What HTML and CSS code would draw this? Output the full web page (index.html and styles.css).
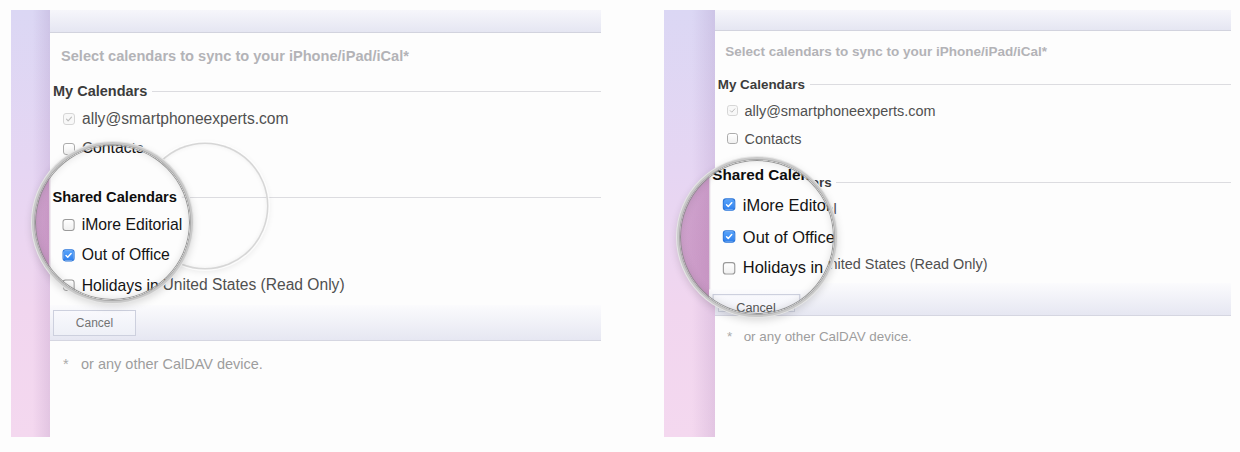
FILE: index.html
```html
<!DOCTYPE html>
<html>
<head>
<meta charset="utf-8">
<link rel="stylesheet" href="styles.css">
</head>
<body>
<div class="page">
  <div class="shot shot-a">
    <div class="side"></div>
    <div class="main">
      <div class="hdr"></div>
      <div class="intro">Select calendars to sync to your iPhone/iPad/iCal*</div>
      <div class="sec">My Calendars</div>
      <div class="row"><span class="cb dis"><svg viewBox="0 0 12 12"><path d="M3 6.2 5 8.2 9 3.8"/></svg></span><span>ally@smartphoneexperts.com</span></div>
      <div class="row"><span class="cb"><svg viewBox="0 0 12 12"><path d="M3 6.2 5 8.2 9 3.8"/></svg></span><span>Contacts</span></div>
      <div class="sec sec2">Shared Calendars</div>
      <div class="row"><span class="cb"><svg viewBox="0 0 12 12"><path d="M3 6.2 5 8.2 9 3.8"/></svg></span><span>iMore Editorial</span></div>
      <div class="row"><span class="cb on"><svg viewBox="0 0 12 12"><path d="M3 6.2 5 8.2 9 3.8"/></svg></span><span>Out of Office</span></div>
      <div class="row"><span class="cb"><svg viewBox="0 0 12 12"><path d="M3 6.2 5 8.2 9 3.8"/></svg></span><span>Holidays in United States (Read Only)</span></div>
      <div class="foot"><div class="btn">Cancel</div></div>
      <div class="note"><span class="star">*</span><span>or any other CalDAV device.</span></div>
    </div>
    <div class="ghost"></div>
    <div class="lens lens-a">
      <div class="lens-view">
        <div class="side"></div>
        <div class="main">
          <div class="hdr"></div>
          <div class="intro">Select calendars to sync to your iPhone/iPad/iCal*</div>
          <div class="sec">My Calendars</div>
          <div class="row"><span class="cb dis"><svg viewBox="0 0 12 12"><path d="M3 6.2 5 8.2 9 3.8"/></svg></span><span>ally@smartphoneexperts.com</span></div>
          <div class="row"><span class="cb"><svg viewBox="0 0 12 12"><path d="M3 6.2 5 8.2 9 3.8"/></svg></span><span>Contacts</span></div>
          <div class="sec sec2">Shared Calendars</div>
          <div class="row"><span class="cb"><svg viewBox="0 0 12 12"><path d="M3 6.2 5 8.2 9 3.8"/></svg></span><span>iMore Editorial</span></div>
          <div class="row"><span class="cb on"><svg viewBox="0 0 12 12"><path d="M3 6.2 5 8.2 9 3.8"/></svg></span><span>Out of Office</span></div>
          <div class="row"><span class="cb"><svg viewBox="0 0 12 12"><path d="M3 6.2 5 8.2 9 3.8"/></svg></span><span>Holidays in United States (Read Only)</span></div>
          <div class="foot"><div class="btn">Cancel</div></div>
          <div class="note"><span class="star">*</span><span>or any other CalDAV device.</span></div>
        </div>
      </div>
    </div>
  </div>

  <div class="shot shot-b">
    <div class="side"></div>
    <div class="main">
      <div class="hdr"></div>
      <div class="intro">Select calendars to sync to your iPhone/iPad/iCal*</div>
      <div class="sec">My Calendars</div>
      <div class="row"><span class="cb dis"><svg viewBox="0 0 12 12"><path d="M3 6.2 5 8.2 9 3.8"/></svg></span><span>ally@smartphoneexperts.com</span></div>
      <div class="row"><span class="cb"><svg viewBox="0 0 12 12"><path d="M3 6.2 5 8.2 9 3.8"/></svg></span><span>Contacts</span></div>
      <div class="sec sec2">Shared Calendars</div>
      <div class="row"><span class="cb on"><svg viewBox="0 0 12 12"><path d="M3 6.2 5 8.2 9 3.8"/></svg></span><span>iMore Editorial</span></div>
      <div class="row"><span class="cb on"><svg viewBox="0 0 12 12"><path d="M3 6.2 5 8.2 9 3.8"/></svg></span><span>Out of Office</span></div>
      <div class="row"><span class="cb"><svg viewBox="0 0 12 12"><path d="M3 6.2 5 8.2 9 3.8"/></svg></span><span>Holidays in United States (Read Only)</span></div>
      <div class="foot"><div class="btn">Cancel</div></div>
      <div class="note"><span class="star">*</span><span>or any other CalDAV device.</span></div>
    </div>
    <div class="lens lens-b">
      <div class="lens-view">
        <div class="side"></div>
        <div class="main">
          <div class="hdr"></div>
          <div class="intro">Select calendars to sync to your iPhone/iPad/iCal*</div>
          <div class="sec">My Calendars</div>
          <div class="row"><span class="cb dis"><svg viewBox="0 0 12 12"><path d="M3 6.2 5 8.2 9 3.8"/></svg></span><span>ally@smartphoneexperts.com</span></div>
          <div class="row"><span class="cb"><svg viewBox="0 0 12 12"><path d="M3 6.2 5 8.2 9 3.8"/></svg></span><span>Contacts</span></div>
          <div class="sec sec2">Shared Calendars</div>
          <div class="row"><span class="cb on"><svg viewBox="0 0 12 12"><path d="M3 6.2 5 8.2 9 3.8"/></svg></span><span>iMore Editorial</span></div>
          <div class="row"><span class="cb on"><svg viewBox="0 0 12 12"><path d="M3 6.2 5 8.2 9 3.8"/></svg></span><span>Out of Office</span></div>
          <div class="row"><span class="cb"><svg viewBox="0 0 12 12"><path d="M3 6.2 5 8.2 9 3.8"/></svg></span><span>Holidays in United States (Read Only)</span></div>
          <div class="foot"><div class="btn">Cancel</div></div>
          <div class="note"><span class="star">*</span><span>or any other CalDAV device.</span></div>
        </div>
      </div>
    </div>
  </div>
</div>
</body>
</html>
```

FILE: styles.css
```css
* { box-sizing: border-box; }

body {
  margin: 0;
  background: #fdfdfd;
  font-family: "Liberation Sans", Arial, Helvetica, sans-serif;
}

.page {
  display: flex;
  gap: 63px;
  padding: 10px 0 0 11px;
}

.shot {
  position: relative;
  display: flex;
  height: 427px;
  --u: calc(var(--s) * 1px);
}
.shot-a { --s: 1; width: 590px; }
.shot-b { --s: 0.925; width: 567px; }

.side {
  flex: none;
  background:
    linear-gradient(to right, rgba(255,255,255,0) 55%, rgba(110,70,140,0.13)),
    linear-gradient(to bottom, #dbd7f4 0%, #e6d6f3 38%, #f1d6ef 70%, #f4d8ef 100%);
}
.shot-a .side { width: 39px; }
.shot-b .side { width: 51px; }

.main {
  flex: 1;
  min-width: 0;
  display: flex;
  flex-direction: column;
  background: #fdfdfd;
  color: #4f4f4f;
}

.hdr {
  flex: none;
  height: calc(23 * var(--u));
  background: linear-gradient(#f6f6fb, #e5e6f2);
  border-bottom: 1px solid #d2d3de;
}

.intro {
  padding: calc(13 * var(--u)) 0 0 calc(11 * var(--u));
  line-height: calc(20 * var(--u));
  font-size: calc(14.6 * var(--u));
  font-weight: bold;
  color: #b3b3b7;
  white-space: nowrap;
}

.sec {
  margin-top: calc(12 * var(--u));
  height: calc(26 * var(--u));
  display: flex;
  align-items: center;
  padding-left: calc(3 * var(--u));
  font-size: calc(14.5 * var(--u));
  font-weight: bold;
  color: #3c3c3c;
  white-space: nowrap;
}
.sec::after {
  content: "";
  flex: 1;
  height: 1px;
  background: #dcdce0;
  margin-left: calc(5 * var(--u));
}
.sec2 { margin-top: calc(20 * var(--u)); }

.row {
  height: calc(30 * var(--u));
  display: flex;
  align-items: center;
  gap: calc(7 * var(--u));
  padding-left: calc(13 * var(--u));
  font-size: calc(15.6 * var(--u));
  color: #505050;
  white-space: nowrap;
}

.cb {
  flex: none;
  display: flex;
  width: calc(12 * var(--u));
  height: calc(12 * var(--u));
  border: 1px solid #acacac;
  border-radius: calc(3 * var(--u));
  background: linear-gradient(#ffffff, #f0f0f0);
}
.cb svg { display: none; width: 100%; height: 100%; }
.cb path {
  fill: none;
  stroke: #ffffff;
  stroke-width: 1.7;
  stroke-linecap: round;
  stroke-linejoin: round;
}
.cb.on {
  background: linear-gradient(#56a3fb, #2f80ee);
  border-color: #2a76da;
}
.cb.dis {
  background: #f8f8f8;
  border-color: #d6d6d6;
}
.cb.on svg, .cb.dis svg { display: block; }
.cb.dis path { stroke: #bdbdbd; stroke-width: 1.3; }

.foot {
  flex: none;
  margin-top: calc(5 * var(--u));
  height: calc(36 * var(--u));
  padding: calc(5 * var(--u)) 0 0 calc(3 * var(--u));
  background: linear-gradient(#fbfbfd, #e6e7f2);
  border-bottom: 1px solid #d5d6e1;
}

.btn {
  width: calc(83 * var(--u));
  height: calc(26 * var(--u));
  display: flex;
  align-items: center;
  justify-content: center;
  border: 1px solid #cdd0de;
  background: linear-gradient(#f9f9fd, #eef0f7);
  font-size: calc(12 * var(--u));
  color: #737373;
}

.note {
  margin-top: calc(13 * var(--u));
  line-height: calc(20 * var(--u));
  display: flex;
  padding-left: calc(13 * var(--u));
  font-size: calc(14.5 * var(--u));
  color: #9d9d9d;
  white-space: nowrap;
}
.star { width: calc(18 * var(--u)); color: #ababab; }

/* faint ghost ring of the moving lens */
.ghost {
  position: absolute;
  left: 132px;
  top: 134px;
  width: 124px;
  height: 124px;
  border-radius: 50%;
  box-shadow:
    0 0 0 1.5px #d6d6d6,
    0 0 0 3px rgba(255,255,255,0.7),
    0 2px 6px 2px rgba(0,0,0,0.08),
    inset 0 0 5px rgba(0,0,0,0.06);
}

/* magnifier lens */
.lens {
  position: absolute;
  border-radius: 50%;
  overflow: hidden;
  background: #fdfdfd;
  box-shadow:
    0 0 0 1px #a8a8a8,
    0 0 0 3px #c9c9c9,
    0 0 0 4px #e6e6e6,
    0 3px 8px 3px rgba(0,0,0,0.16);
}
.lens::after {
  content: "";
  position: absolute;
  inset: 0;
  border-radius: 50%;
  box-shadow:
    inset 0 0 0 1px rgba(140,140,140,0.9),
    inset 0 0 9px rgba(0,0,0,0.15);
}
.lens-a { left: 24px; top: 135px; width: 155px; height: 155px; }
.lens-b { left: 16px; top: 150px; width: 154px; height: 154px; }

.lens-view {
  position: absolute;
  display: flex;
  height: 427px;
}
.lens-a .lens-view {
  left: -24px;
  top: -135px;
  width: 590px;
  transform: scale(1.01);
  transform-origin: 101.5px 212.5px;
}
.lens-b .lens-view {
  left: -16px;
  top: -150px;
  width: 567px;
  transform: scale(1.14);
  transform-origin: 93px 227px;
}

.lens .side {
  background:
    linear-gradient(to right, rgba(255,255,255,0) 30%, rgba(120,40,110,0.14)),
    linear-gradient(to bottom, #d8b6dc, #d4a7d1 60%, #d9acd4);
}
.lens .main { box-shadow: inset 1px 0 0 rgba(120,60,120,0.25); }
.lens .row { color: #141414; }
.lens .sec { color: #0e0e0e; }
.lens .btn { color: #555; }
.lens .cb { border-color: #9a9a9a; }
.lens .cb.on { border-color: #2a76da; }
```
